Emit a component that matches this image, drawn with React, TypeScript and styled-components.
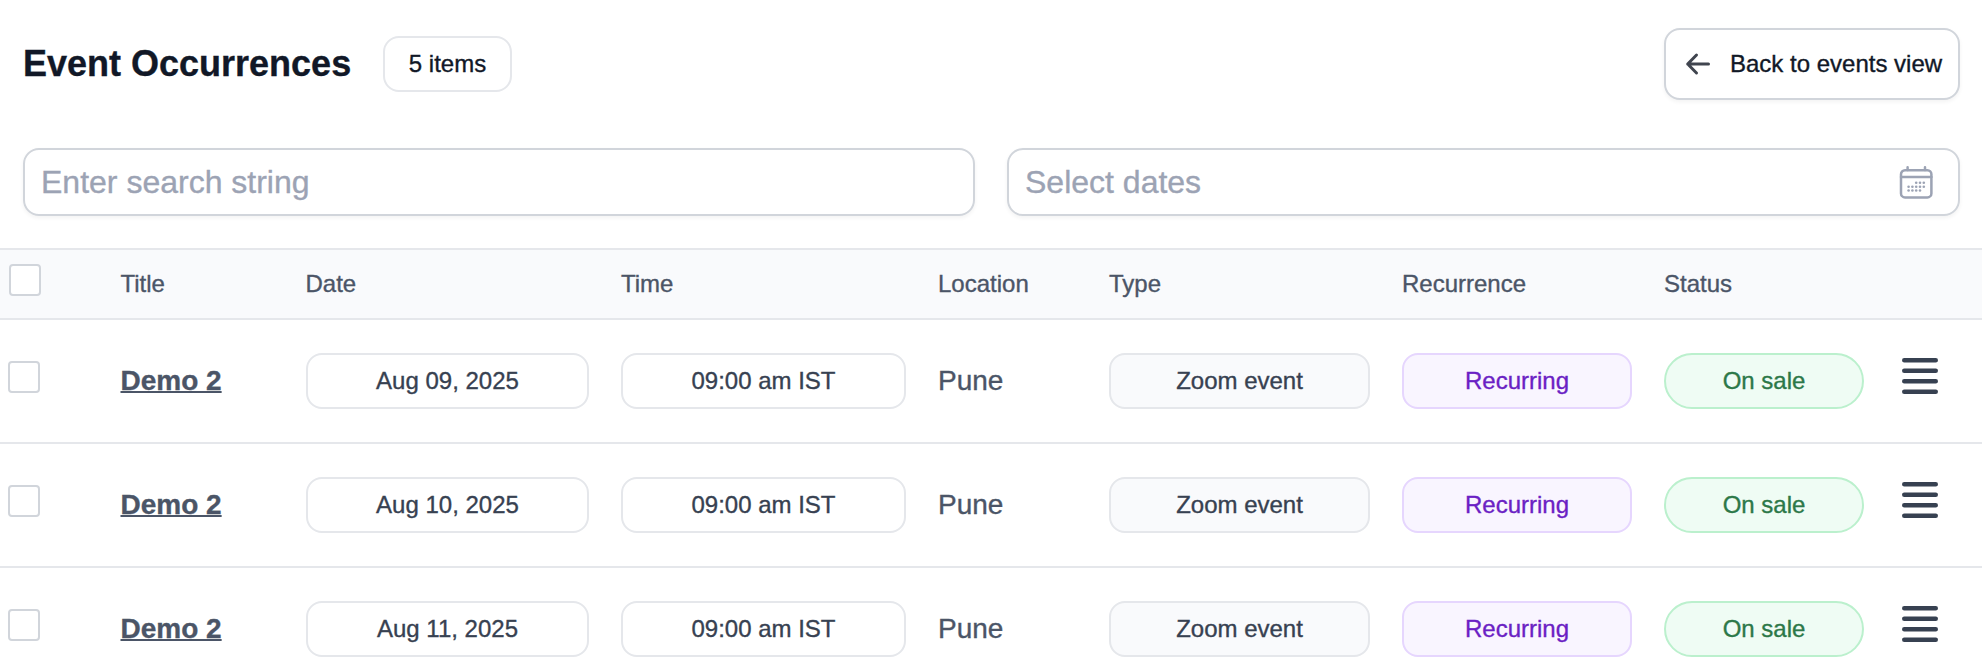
import React from "react";
import styled, { createGlobalStyle, css } from "styled-components";

const GlobalStyle = createGlobalStyle`
  *, *::before, *::after { box-sizing: border-box; }
  html, body { margin: 0; height: 666px; overflow: hidden; background: #fff; }
  body {
    font-family: "Liberation Sans", Helvetica, Arial, sans-serif;
    color: #111827;
    -webkit-text-stroke: 0.35px;
  }
`;

const Page = styled.main`
  width: 100%;
  background: #fff;
`;

const Header = styled.header`
  display: flex;
  align-items: center;
  padding: 28px 22px 0 23px;
  height: 100px;
`;

const Heading = styled.h1`
  width: 327px;
  margin: 0;
  font-size: 36px;
  line-height: 56px;
  font-weight: 700;
  white-space: nowrap;
`;

const CountBadge = styled.span`
  width: 129px;
  height: 56px;
  margin-left: 33px;
  border: 2px solid #e5e7eb;
  border-radius: 16px;
  font-size: 24px;
  line-height: 52px;
  text-align: center;
`;

const BackButton = styled.button`
  display: flex;
  align-items: center;
  width: 296px;
  height: 72px;
  margin-left: auto;
  padding: 0 0 0 16px;
  gap: 16px;
  border: 2px solid #d1d5db;
  border-radius: 16px;
  background: #fff;
  color: #111827;
  font: 24px "Liberation Sans", Helvetica, Arial, sans-serif;
  white-space: nowrap;
  box-shadow: 0 2px 4px rgba(0, 0, 0, 0.05);
`;

const Filters = styled.div`
  display: grid;
  grid-template-columns: 952fr 953fr;
  gap: 32px;
  padding: 48px 22px 32px 23px;
`;

const Field = styled.div`
  display: flex;
  align-items: center;
  height: 68px;
  padding: 0 25px 0 16px;
  border: 2px solid #d1d5db;
  border-radius: 16px;
  box-shadow: 0 2px 4px rgba(0, 0, 0, 0.05);
`;

const FieldInput = styled.input`
  flex: 1;
  min-width: 0;
  padding: 0;
  border: 0;
  outline: 0;
  background: transparent;
  font: 32px "Liberation Sans", Helvetica, Arial, sans-serif;
  &::placeholder { color: #9ca3b4; opacity: 1; }
`;

const gridRow = css`
  display: grid;
  grid-template-columns: 105px 185px 315px 317px 171px 293px 262px 232px 1fr;
`;

const HeadRow = styled.div`
  ${gridRow}
  height: 72px;
  border-top: 2px solid #e5e7eb;
  border-bottom: 2px solid #e5e7eb;
  background: #f9fafc;
`;

const HeadCell = styled.div`
  padding-left: 16px;
  font-size: 24px;
  line-height: 68px;
  color: #4b5567;

  &:nth-child(2),
  &:nth-child(3) {
    padding-left: 15.5px;
  }
`;

const Row = styled.div`
  ${gridRow}
  height: 124px;
  border-bottom: 2px solid #e5e7eb;
`;

const Cell = styled.div`
  padding: 33px 16px 0;
`;

const CheckCell = styled.div<{ $head?: boolean }>`
  padding: ${(p) => (p.$head ? "14px 0 0 9px" : "41px 0 0 8px")};
`;

const Checkbox = styled.input`
  display: block;
  appearance: none;
  width: 32px;
  height: 32px;
  margin: 0;
  border: 2px solid #d1d5db;
  border-radius: 4px;
  background: #fff;
`;

const TitleLink = styled.a`
  display: block;
  margin-left: -0.5px;
  font-size: 28px;
  line-height: 56px;
  font-weight: 700;
  color: #4b5567;
  text-decoration: underline;
  text-decoration-thickness: 2px;
  text-underline-offset: 1px;
  text-decoration-skip-ink: none;
`;

const LocationText = styled.span`
  display: block;
  font-size: 28px;
  line-height: 56px;
  color: #4b5567;
`;

type Tone = "plain" | "gray" | "purple" | "green";

const tones: Record<Tone, { bg: string; line: string; ink: string; radius: number }> = {
  plain: { bg: "#ffffff", line: "#e5e7eb", ink: "#374151", radius: 16 },
  gray: { bg: "#f9fafc", line: "#e5e7eb", ink: "#374151", radius: 16 },
  purple: { bg: "#f9f5ff", line: "#e6d6fe", ink: "#6b1fc4", radius: 16 },
  green: { bg: "#effcf4", line: "#bbf0cd", ink: "#2c7848", radius: 28 },
};

const Pill = styled.span<{ $tone: Tone }>`
  display: block;
  height: 56px;
  border: 2px solid ${(p) => tones[p.$tone].line};
  border-radius: ${(p) => tones[p.$tone].radius}px;
  background: ${(p) => tones[p.$tone].bg};
  color: ${(p) => tones[p.$tone].ink};
  font-size: 24px;
  line-height: 52px;
  text-align: center;
  white-space: nowrap;
`;

const MenuCell = styled.div`
  padding: 38px 0 0 22px;
`;

const MenuButton = styled.button`
  display: block;
  padding: 0;
  border: 0;
  background: none;
`;

const Icon = styled.svg`
  display: block;
  flex: none;
`;

const ArrowIcon = () => (
  <Icon width="32" height="32" viewBox="0 0 32 32" fill="none" stroke="#40454f" strokeWidth="3" strokeLinecap="round" strokeLinejoin="round">
    <path d="M26.5 16H5.7M14.5 7L5.7 16L14.5 25" />
  </Icon>
);

const calendarDots = [
  [17.2, 17.7], [21, 17.7], [24.8, 17.7],
  [9.6, 21.7], [13.4, 21.7], [17.2, 21.7], [21, 21.7], [24.8, 21.7],
  [9.6, 25.5], [13.4, 25.5], [17.2, 25.5], [21, 25.5],
];

const CalendarIcon = () => (
  <Icon width="34" height="34" viewBox="0 0 34 34" fill="none" stroke="#9ca3b4" strokeWidth="2.5">
    <rect x="2" y="5.2" width="30.4" height="27.2" rx="4" />
    <path d="M2 12H32.4M8.6 2.2V5M26 2.2V5" strokeLinecap="round" />
    {calendarDots.map(([x, y]) => (
      <circle key={`${x}-${y}`} cx={x} cy={y} r="1.3" fill="#9ca3b4" stroke="none" />
    ))}
  </Icon>
);

const MenuIcon = () => (
  <Icon width="36" height="36" viewBox="0 0 36 36" fill="none" stroke="#374151" strokeWidth="4.5" strokeLinecap="round">
    <path d="M2.25 2.25H33.75M2.25 12.75H33.75M2.25 23.25H33.75M2.25 33.75H33.75" />
  </Icon>
);

const columns = ["Title", "Date", "Time", "Location", "Type", "Recurrence", "Status"];
const dates = ["Aug 09, 2025", "Aug 10, 2025", "Aug 11, 2025"];

export default function App() {
  return (
    <>
      <GlobalStyle />
      <Page>
        <Header>
          <Heading>Event Occurrences</Heading>
          <CountBadge>5 items</CountBadge>
          <BackButton>
            <ArrowIcon />
            Back to events view
          </BackButton>
        </Header>
        <Filters>
          <Field>
            <FieldInput placeholder="Enter search string" />
          </Field>
          <Field>
            <FieldInput placeholder="Select dates" />
            <CalendarIcon />
          </Field>
        </Filters>
        <HeadRow>
          <CheckCell $head>
            <Checkbox type="checkbox" />
          </CheckCell>
          {columns.map((name) => (
            <HeadCell key={name}>{name}</HeadCell>
          ))}
        </HeadRow>
        {dates.map((date) => (
          <Row key={date}>
            <CheckCell>
              <Checkbox type="checkbox" />
            </CheckCell>
            <Cell><TitleLink>Demo 2</TitleLink></Cell>
            <Cell><Pill $tone="plain">{date}</Pill></Cell>
            <Cell><Pill $tone="plain">09:00 am IST</Pill></Cell>
            <Cell><LocationText>Pune</LocationText></Cell>
            <Cell><Pill $tone="gray">Zoom event</Pill></Cell>
            <Cell><Pill $tone="purple">Recurring</Pill></Cell>
            <Cell><Pill $tone="green">On sale</Pill></Cell>
            <MenuCell>
              <MenuButton aria-label="Actions"><MenuIcon /></MenuButton>
            </MenuCell>
          </Row>
        ))}
      </Page>
    </>
  );
}
